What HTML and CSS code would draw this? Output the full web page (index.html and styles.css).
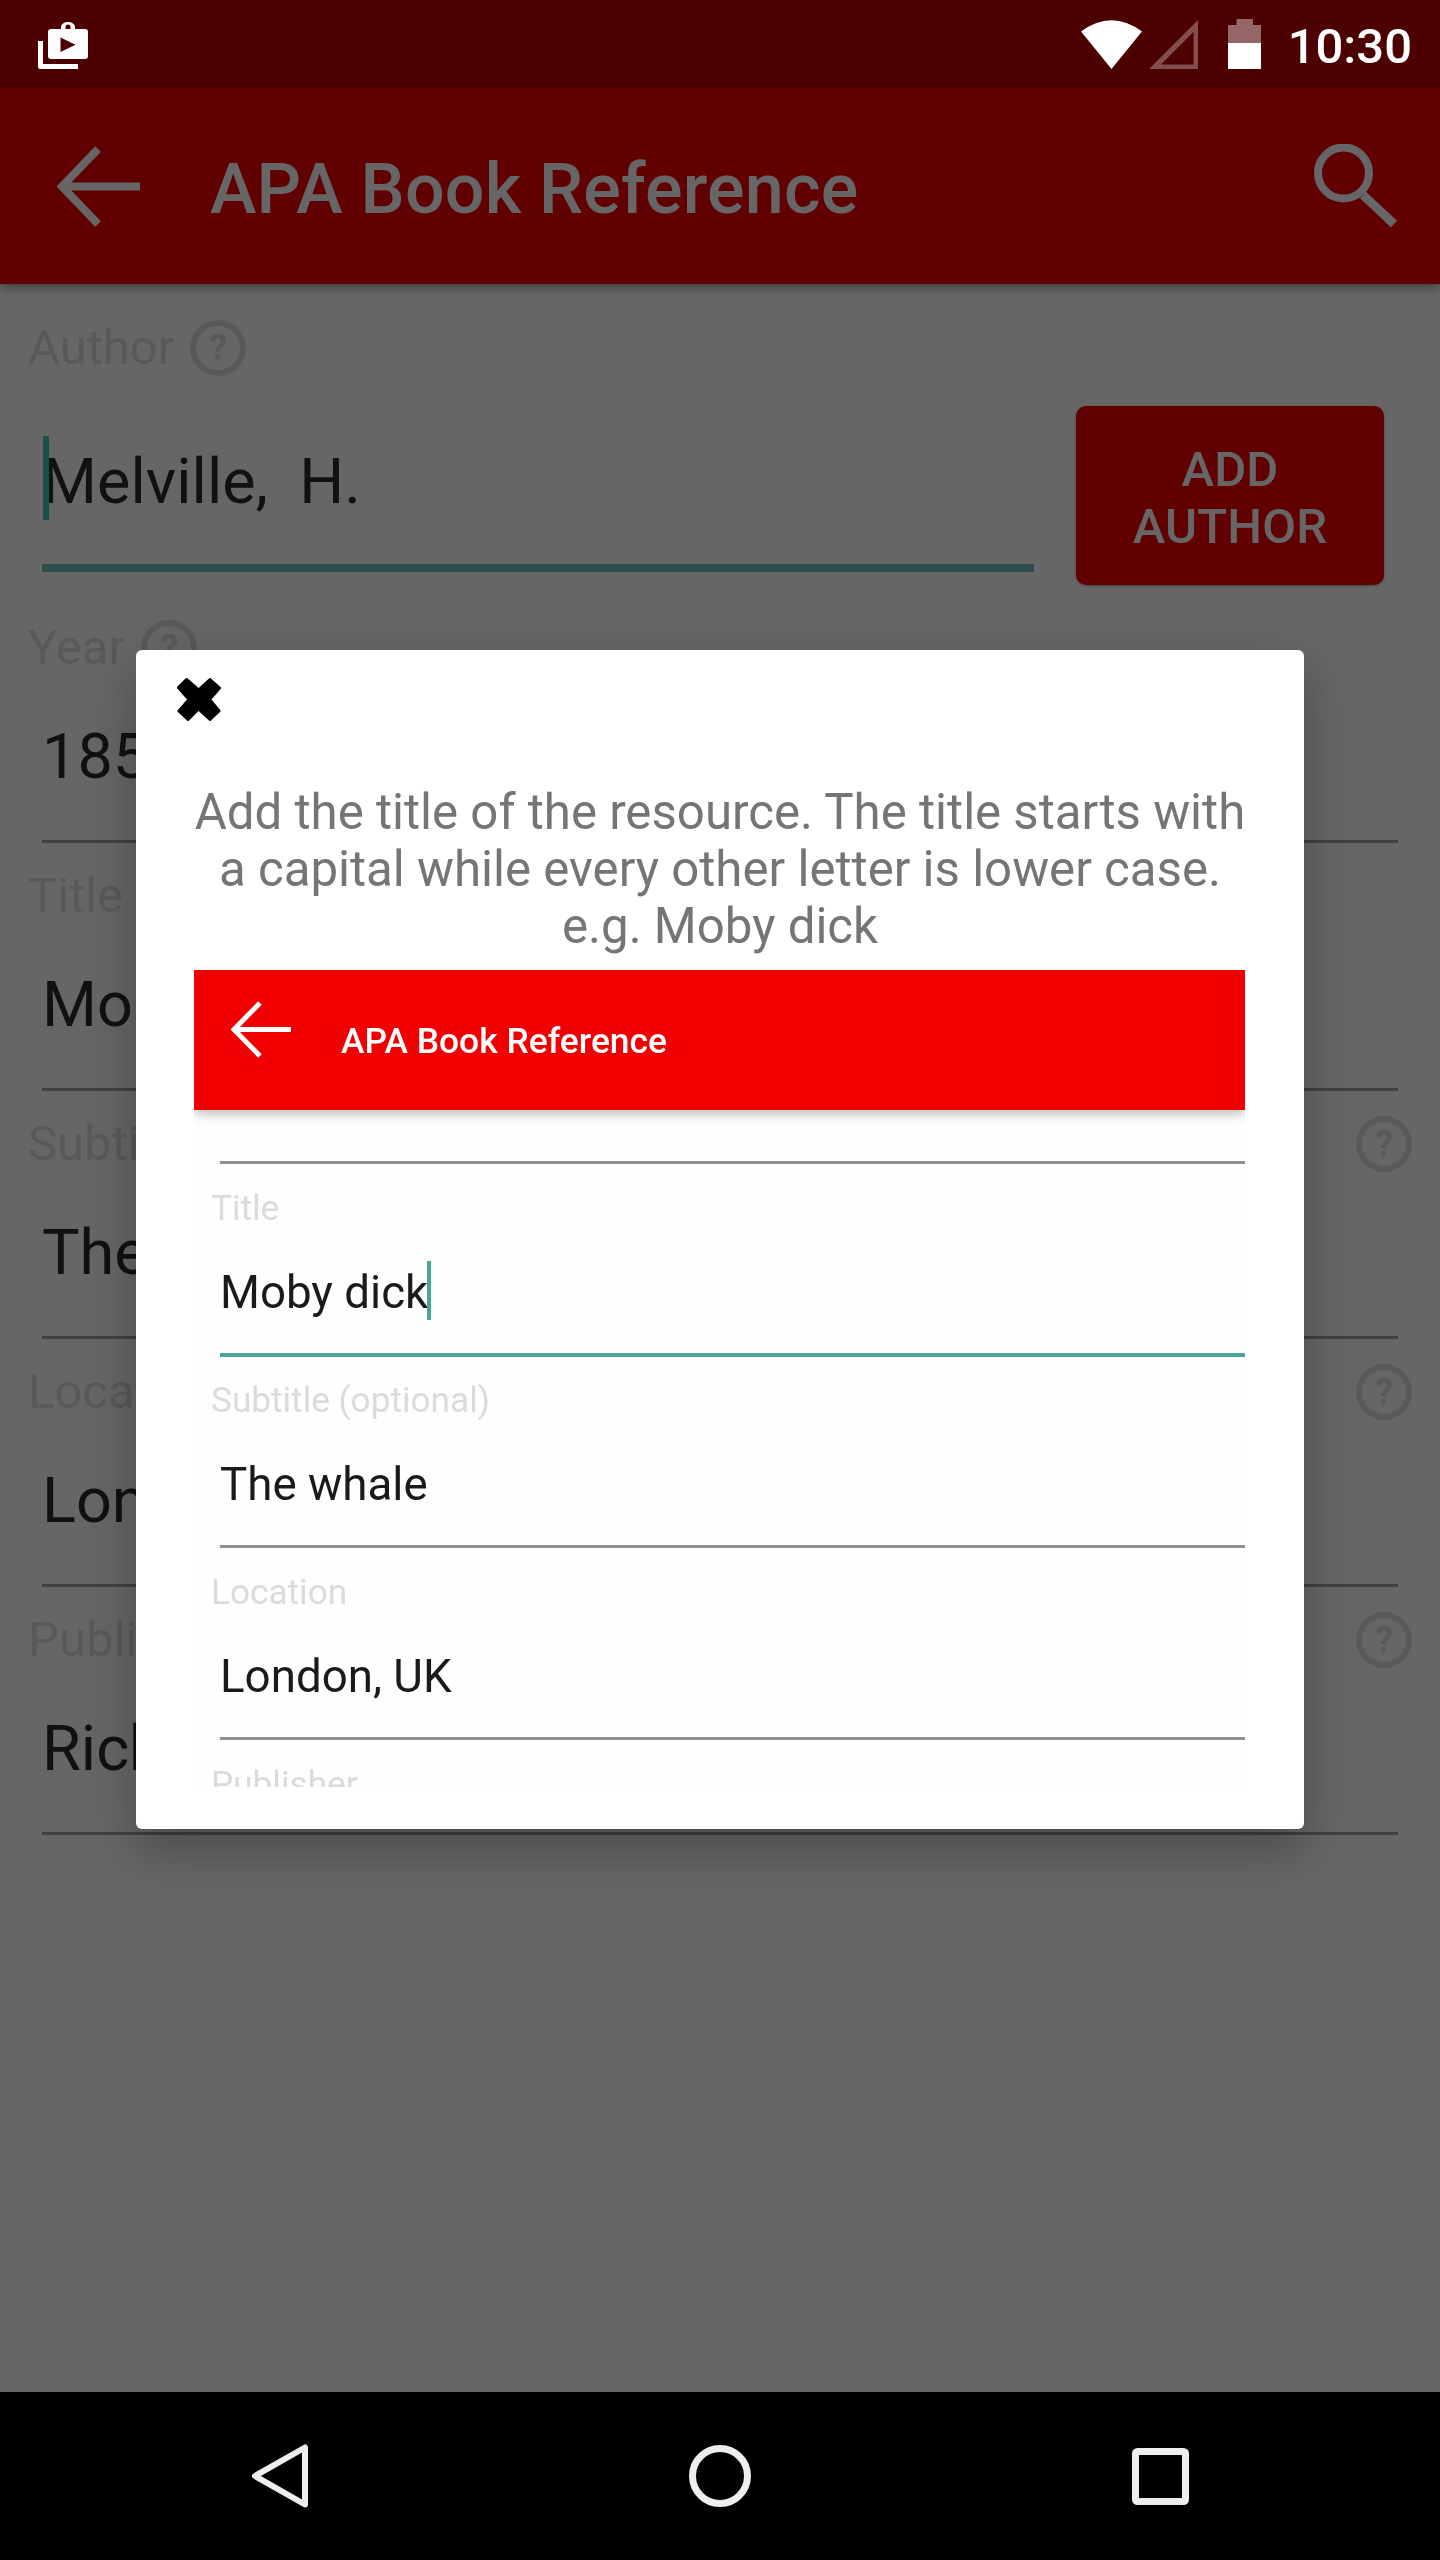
FILE: index.html
```html
<!DOCTYPE html>
<html lang="en">
<head>
    <meta charset="UTF-8">
    <meta name="viewport" content="width=device-width, initial-scale=1.0">
    <title>APA Book Reference</title>
    <link rel="stylesheet" href="styles.css">
</head>
<body>
<div class="screen">

    <div class="status">
        <svg class="status-shop" width="50" height="47" viewBox="0 0 50 47">
            <path d="M0 19h5v23h35v5H2a2 2 0 0 1-2-2z" fill="#fff"/>
            <path d="M13 7h10V5a7 5 0 0 1 14 0v2h10a3 3 0 0 1 3 3v24a3 3 0 0 1-3 3H13a3 3 0 0 1-3-3V10a3 3 0 0 1 3-3zM27.500 7h5V5a2.500 2.500 0 0 0-5 0z" fill="#fff" fill-rule="evenodd"/>
            <path d="M22.500 15.500v14.500l15-7.200z" fill="#4d0000"/>
        </svg>
        <svg class="status-wifi" width="61" height="49" viewBox="0 0 61 49">
            <path d="M30.500 49L0 11.500Q30.500 -11 61 11.500z" fill="#fff"/>
        </svg>
        <svg class="status-signal" width="49" height="49" viewBox="0 0 49 49">
            <path d="M0 49L49 0v49zM12 44.500h32.500V12z" fill="#fff" fill-opacity="0.3" fill-rule="evenodd"/>
        </svg>
        <svg class="status-battery" width="33" height="50" viewBox="0 0 33 50">
            <path d="M8.500 0H25v6h8v18H0V6h8.500z" fill="#fff" fill-opacity="0.4"/>
            <rect y="24" width="33" height="26" fill="#fff"/>
        </svg>
        <span class="status-time">10:30</span>
    </div>

    <div class="app">
        <div class="appbar">
            <svg class="appbar-back" width="83" height="81" viewBox="0 0 83 81">
                <path d="M41 3L5 40.500L41 78M5 40.500H83" fill="none" stroke="#fff" stroke-width="8"/>
            </svg>
            <span class="appbar-title">APA Book Reference</span>
            <svg class="appbar-search" width="84" height="84" viewBox="0 0 84 84">
                <circle cx="29.500" cy="29" r="25.500" fill="none" stroke="#fff" stroke-width="8"/>
                <path d="M49 51L80 80" fill="none" stroke="#fff" stroke-width="9"/>
            </svg>
        </div>

        <div class="form">
            <div class="author-row">
                <div class="author-field">
                    <div class="label">Author <span class="help">?</span></div>
                    <div class="author-value"><span class="cursor"></span>Melville,  H.</div>
                </div>
                <div class="add-btn">ADD<br>AUTHOR</div>
            </div>

            <div class="field">
                <div class="label">Year <span class="help">?</span></div>
                <div class="value">1851</div>
            </div>
            <div class="field">
                <div class="label">Title</div>
                <div class="value">Moby dick</div>
            </div>
            <div class="field">
                <div class="label label-split">Subtitle (optional) <span class="help">?</span></div>
                <div class="value">The whale</div>
            </div>
            <div class="field">
                <div class="label label-split">Location <span class="help">?</span></div>
                <div class="value">London, UK</div>
            </div>
            <div class="field">
                <div class="label label-split">Publisher <span class="help">?</span></div>
                <div class="value">Richard Bentley</div>
            </div>
        </div>

        <div class="scrim">
            <div class="dialog">
                <svg class="dialog-close" width="44" height="43" viewBox="0 0 44 43">
                    <path d="M9.500 1.500L21.500 12L33 1.500L42.500 10L32.500 21.500L42 33L33 41.500L21.500 31L11 41.500L2 33L12 21.500L1.500 9.500z" fill="#000" stroke="#000" stroke-width="3" stroke-linejoin="round"/>
                </svg>
                <p class="dialog-text">Add the title of the resource. The title starts with<br>a capital while every other letter is lower case.<br>e.g. Moby dick</p>

                <div class="shot">
                    <div class="shot-bar">
                        <svg class="shot-back" width="60" height="57" viewBox="0 0 60 57">
                            <path d="M29 2L3 28.500L29 55M3 28.500H60" fill="none" stroke="#fff" stroke-width="5"/>
                        </svg>
                        <span class="shot-title">APA Book Reference</span>
                    </div>
                    <div class="shot-stub"></div>
                    <div class="shot-field">
                        <div class="shot-label">Title</div>
                        <div class="shot-value shot-value-active">Moby dick<span class="shot-cursor"></span></div>
                    </div>
                    <div class="shot-field">
                        <div class="shot-label">Subtitle (optional)</div>
                        <div class="shot-value">The whale</div>
                    </div>
                    <div class="shot-field">
                        <div class="shot-label">Location</div>
                        <div class="shot-value">London, UK</div>
                    </div>
                    <div class="shot-field">
                        <div class="shot-label">Publisher</div>
                    </div>
                </div>
            </div>
        </div>
    </div>

    <div class="navbar">
        <svg width="58" height="66" viewBox="0 0 58 66">
            <path d="M54 4.500V61.500L4 33z" fill="none" stroke="#eee" stroke-width="6" stroke-linejoin="round"/>
        </svg>
        <svg width="62" height="62" viewBox="0 0 62 62">
            <circle cx="31" cy="31" r="27.500" fill="none" stroke="#eee" stroke-width="7"/>
        </svg>
        <svg width="57" height="57" viewBox="0 0 57 57">
            <rect x="3.500" y="3.500" width="50" height="50" rx="2" fill="none" stroke="#eee" stroke-width="7"/>
        </svg>
    </div>

</div>
</body>
</html>
```

FILE: styles.css
```css
body {
    margin: 0;
    font-family: Roboto, "Liberation Sans", sans-serif;
}
.screen {
    width: 1440px;
    height: 2560px;
    display: flex;
    flex-direction: column;
    overflow: hidden;
}

/* status bar */
.status {
    height: 88px;
    flex-shrink: 0;
    background: #4d0000;
    display: flex;
    align-items: center;
    padding: 0 28px 0 38px;
    box-sizing: border-box;
}
.status-shop {
    margin-top: 3px;
    margin-right: auto;
}
.status-signal {
    margin-left: 7px;
}
.status-battery {
    margin-left: 30px;
    margin-top: -1px;
}
.status-time {
    margin-left: 27px;
    padding-top: 4px;
    color: #fff;
    font-size: 49px;
    font-weight: 500;
}

/* page under the scrim */
.app {
    flex: 1;
    position: relative;
    background: #fff;
}
.appbar {
    height: 196px;
    background: #f00000;
    display: flex;
    align-items: center;
    padding: 0 42px 0 57px;
    box-shadow: 0 4px 10px rgba(0, 0, 0, 0.35);
}
.appbar-title {
    margin-left: 70px;
    padding-top: 6px;
    color: #fff;
    font-size: 70px;
    font-weight: 500;
    letter-spacing: 0.2px;
}
.appbar-search {
    margin-left: auto;
}
.form {
    padding: 35px 28px 0;
}
.label {
    height: 57px;
    line-height: 57px;
    color: #dcdfde;
    font-size: 49px;
    display: flex;
    align-items: center;
    gap: 16px;
}
.label-split {
    justify-content: space-between;
}
.help {
    width: 56px;
    height: 56px;
    box-sizing: border-box;
    border: 6px solid #dcdfde;
    border-radius: 50%;
    color: #dcdfde;
    font-size: 36px;
    font-weight: 700;
    line-height: 44px;
    text-align: center;
}
.author-row {
    display: flex;
    align-items: flex-start;
    margin-bottom: 34px;
}
.author-field {
    width: 1006px;
}
.author-value {
    position: relative;
    height: 74px;
    line-height: 74px;
    margin: 69px 0 0 14px;
    padding-bottom: 45px;
    border-bottom: 8px solid #70c5c2;
    color: #2b2b2b;
    font-size: 63px;
    white-space: pre;
}
.cursor {
    position: absolute;
    left: 1px;
    top: -9px;
    width: 6px;
    height: 84px;
    background: #41c5b9;
}
.add-btn {
    width: 308px;
    height: 179px;
    margin: 87px 0 0 42px;
    padding-top: 4px;
    box-sizing: border-box;
    background: #f00000;
    border-radius: 10px;
    color: #fff;
    font-size: 49px;
    font-weight: 500;
    letter-spacing: 0.2px;
    line-height: 57px;
    text-align: center;
    display: flex;
    align-items: center;
    justify-content: center;
    box-shadow: 0 1px 3px rgba(0, 0, 0, 0.3);
}
.field {
    margin-bottom: 24px;
}
.value {
    height: 74px;
    line-height: 74px;
    margin: 44px 14px 0;
    padding-bottom: 46px;
    border-bottom: 3px solid #a3a3a3;
    color: #2b2b2b;
    font-size: 63px;
}

/* dialog */
.scrim {
    position: absolute;
    top: 0;
    left: 0;
    right: 0;
    bottom: 0;
    padding-bottom: 1px;
    background: rgba(0, 0, 0, 0.6);
    display: flex;
    align-items: center;
    justify-content: center;
}
.dialog {
    width: 1168px;
    padding: 28px 0 42px;
    box-sizing: border-box;
    background: #fff;
    border-radius: 6px;
    box-shadow: 0 20px 50px rgba(0, 0, 0, 0.28);
}
.dialog-close {
    display: block;
    margin-left: 41px;
}
.dialog-text {
    margin: 63px 58px 15px;
    color: #757575;
    font-size: 49.2px;
    line-height: 57px;
    text-align: center;
    white-space: nowrap;
}

/* picture of the form inside the dialog */
.shot {
    height: 817px;
    margin: 0 59px 0 58px;
    overflow: hidden;
    background: #fefefe;
    filter: blur(0.6px);
}
.shot-bar {
    height: 140px;
    background: #f00000;
    display: flex;
    align-items: flex-start;
    padding-left: 37px;
    box-shadow: 0 3px 12px rgba(0, 0, 0, 0.3);
}
.shot-back {
    margin-top: 31px;
}
.shot-title {
    margin: 51px 0 0 50px;
    color: #fff;
    font-size: 35.4px;
    font-weight: 500;
    line-height: 41px;
}
.shot-stub {
    height: 3px;
    margin: 51px 0 0 26px;
    background: #8f8f8f;
}
.shot-field {
    margin-top: 24px;
}
.shot-label {
    height: 40px;
    line-height: 40px;
    margin-left: 17px;
    color: #d8dcdb;
    font-size: 35.2px;
}
.shot-value {
    position: relative;
    height: 53px;
    line-height: 53px;
    margin: 38px 0 0 26px;
    padding-bottom: 34px;
    border-bottom: 3px solid #8f8f8f;
    color: #1a1a1a;
    font-size: 45.7px;
}
.shot-value-active {
    margin-bottom: -1px;
    border-bottom: 4px solid #4aa59b;
}
.shot-cursor {
    position: absolute;
    left: 207px;
    top: -5px;
    width: 4px;
    height: 59px;
    background: #4aa59b;
}

/* nav bar */
.navbar {
    height: 168px;
    flex-shrink: 0;
    background: #000;
    display: grid;
    grid-template-columns: repeat(3, 440px);
    justify-content: center;
    justify-items: center;
    align-items: center;
}
```
